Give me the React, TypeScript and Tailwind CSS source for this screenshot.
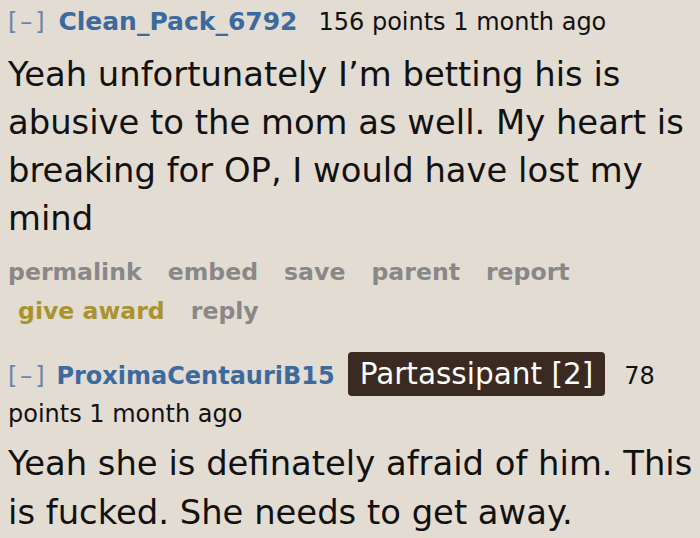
export default function App() {
  const dv = { fontFamily: '"DejaVu Sans", Verdana, sans-serif' };
  return (
    <div className="w-[700px] h-[538px] overflow-hidden bg-[#e3dcd2] text-[#111]" style={dv}>
      <div className="pl-[8px] pt-[6px]">
        <div className="text-[24px] leading-[32px] whitespace-nowrap">
          <span className="text-[#6a85ad] tracking-[3px] mr-[3px]">[–]</span>{' '}
          <span className="text-[#3d6a9e] font-bold text-[25px]">Clean_Pack_6792</span>
          <span className="ml-[21px]">156 points 1 month ago</span>
        </div>
        <p className="text-[33.8px] leading-[48px] mt-[13px]">
          Yeah unfortunately I’m betting his is abusive to the mom as well. My heart is breaking for OP, I would have lost my mind
        </p>
        <div className="text-[23.6px] leading-[39px] font-bold text-[#888888] mt-[10px]">
          <div className="flex gap-[26px]">
            <span>permalink</span><span>embed</span><span>save</span><span>parent</span><span>report</span>
          </div>
          <div className="flex gap-[26px] pl-[10px]">
            <span className="text-[#a99330]">give award</span><span>reply</span>
          </div>
        </div>
      </div>
      <div className="pl-[8px] pt-[24px]">
        <div className="text-[24px] leading-[38px]">
          <span className="text-[#6a85ad] tracking-[3px] mr-[1px]">[–]</span>{' '}
          <span className="text-[#3d6a9e] font-bold">ProximaCentauriB15</span>
          <span className="bg-[#3b2a22] text-white rounded-[4px] px-[12px] py-[5px] text-[29.5px] ml-[13px] mr-[19px]">Partassipant [2]</span>
          <span>78</span>{' '}
          points 1 month ago
        </div>
        <p className="text-[33.8px] leading-[49px] mt-[6px]">
          Yeah she is definately afraid of him. This is fucked. She needs to get away.
        </p>
      </div>
    </div>
  );
}
